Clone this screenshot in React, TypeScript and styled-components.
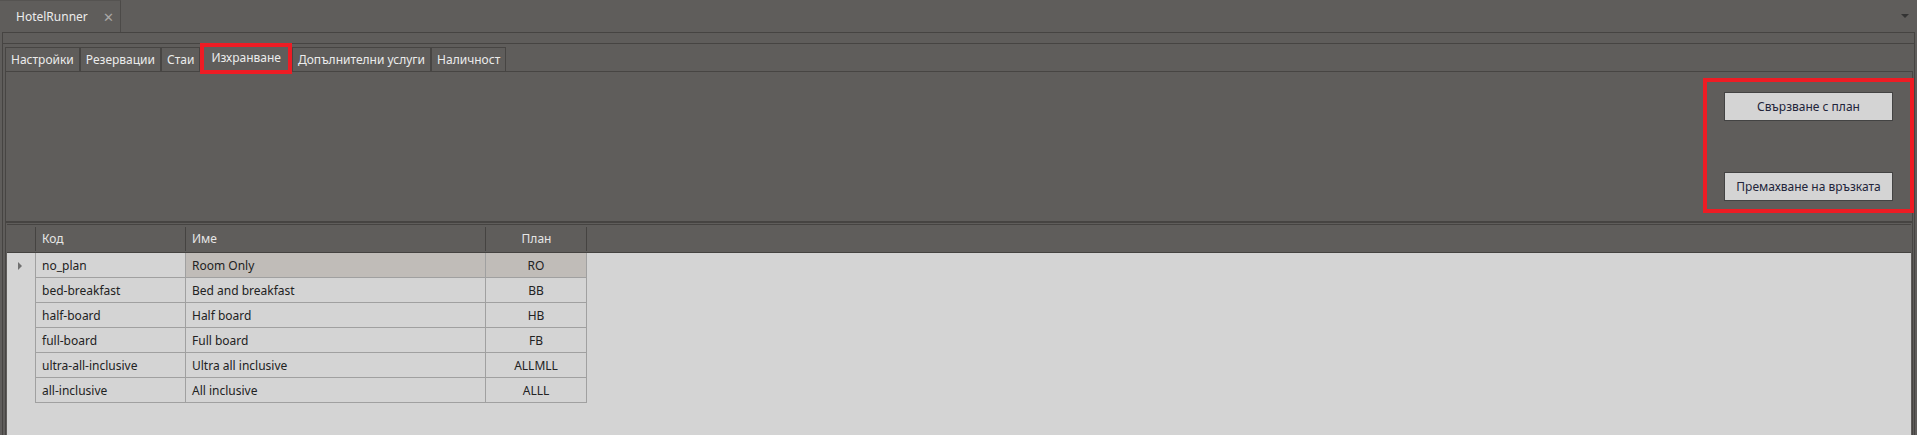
import {createGlobalStyle, styled} from "styled-components";

const GlobalStyle = createGlobalStyle`
  html, body {
    margin: 0;
    padding: 0;
    background: #5f5d5b;
  }

  body {
    font-family: "Noto Sans", "Open Sans", sans-serif;
    font-size: 12px;
  }
`;

const Window = styled.div`
  height: 435px;
  overflow: hidden;
  display: flex;
  flex-direction: column;
  background: #5f5d5b;
`;

const DocBar = styled.div`
  height: 32px;
  display: flex;
  align-items: stretch;
  justify-content: space-between;
`;

const DocTab = styled.div`
  width: 121px;
  box-sizing: border-box;
  border-top: 1px solid #555351;
  border-right: 1px solid #4c4a48;
  display: flex;
  align-items: center;
  padding-left: 16px;
  color: #ececec;
  font-size: 12px;
`;

const CloseMark = styled.span`
  margin-left: 15px;
  color: #a9a7a5;
  font-size: 13px;
`;

const DropArrow = styled.div`
  width: 0;
  height: 0;
  margin: 14px 8px 0 0;
  border-left: 4px solid transparent;
  border-right: 4px solid transparent;
  border-top: 4px solid #333;
`;

const Frame = styled.div`
  flex: 1;
  margin: 0 2px;
  border: 1px solid #464442;
  border-bottom: none;
  display: flex;
  flex-direction: column;
  min-height: 0;
`;

const ToolStrip = styled.div`
  height: 10px;
  border-bottom: 1px solid #464442;
`;

const TabControl = styled.div`
  flex: 1;
  padding: 0 1px 0 2px;
  display: flex;
  flex-direction: column;
  min-height: 0;
`;

const TabStrip = styled.div`
  height: 27px;
  display: flex;
  align-items: flex-end;
`;

const Tab = styled.div<{ $active?: boolean }>`
  box-sizing: border-box;
  height: ${p => (p.$active ? "31px" : "24px")};
  margin-bottom: ${p => (p.$active ? "-3px" : "0")};
  padding: ${p => (p.$active ? "0 7px 3px" : "0 5px")};
  border: ${p => (p.$active ? "4px solid #ed1c24" : "1px solid #474543")};
  border-bottom: ${p => (p.$active ? "4px solid #ed1c24" : "none")};
  display: flex;
  align-items: center;
  color: #ececec;
  white-space: nowrap;
  position: relative;
  z-index: ${p => (p.$active ? 2 : 0)};
`;

const TabPage = styled.div`
  flex: 1;
  border: 1px solid #474543;
  border-bottom: none;
  display: flex;
  flex-direction: column;
  min-height: 0;
`;

const CommandArea = styled.div`
  height: 149px;
  box-sizing: border-box;
  padding-top: 6px;
  display: flex;
  justify-content: flex-end;
  align-items: flex-start;
`;

const CommandBox = styled.div`
  width: 211px;
  height: 135px;
  box-sizing: border-box;
  margin-right: -2px;
  border: 4px solid #ed1c24;
  padding: 10px 0 0;
  display: flex;
  flex-direction: column;
  align-items: center;
  gap: 51px;
`;

const CommandButton = styled.button`
  width: 169px;
  height: 29px;
  background: #d4d4d4;
  border: 1px solid #434343;
  color: #22243a;
  font-family: "Noto Sans", "Open Sans", sans-serif;
  font-size: 12px;
  padding: 0;
`;

const Splitter = styled.div`
  height: 2px;
  background: #464442;
  margin-bottom: 1px;
`;

const Grid = styled.div`
  flex: 1;
  margin: 0 1px;
  border-top: 1px solid #464442;
  background: #d4d4d4;
  display: flex;
  flex-direction: column;
`;

const HeaderRow = styled.div`
  height: 27px;
  background: #5f5d5b;
  border-bottom: 1px solid #444240;
  display: grid;
  grid-template-columns: 29px 150px 300px 101px;
`;

const HeaderCell = styled.div<{ $center?: boolean }>`
  position: relative;
  display: flex;
  align-items: center;
  justify-content: ${p => (p.$center ? "center" : "flex-start")};
  padding-left: ${p => (p.$center ? "0" : "6px")};
  color: #e6e6e6;

  &::after {
    content: "";
    position: absolute;
    right: 0;
    top: 2px;
    bottom: 1px;
    width: 1px;
    background: #454341;
  }
`;

const BodyRow = styled.div`
  height: 25px;
  display: grid;
  grid-template-columns: 29px 150px 300px 101px;
`;

const RowHead = styled.div`
  box-sizing: border-box;
  border-right: 1px solid #a0a0a0;
  display: flex;
  align-items: center;
  padding-left: 11px;
`;

const RowArrow = styled.span`
  width: 0;
  height: 0;
  border-top: 4px solid transparent;
  border-bottom: 4px solid transparent;
  border-left: 4px solid #707070;
`;

const Cell = styled.div<{ $center?: boolean; $selected?: boolean }>`
  box-sizing: border-box;
  border-right: 1px solid #a0a0a0;
  border-bottom: 1px solid #a0a0a0;
  background: ${p => (p.$selected ? "#c0bcb8" : "#d4d4d4")};
  display: flex;
  align-items: center;
  justify-content: ${p => (p.$center ? "center" : "flex-start")};
  padding-left: ${p => (p.$center ? "0" : "6px")};
  color: #222;
  white-space: nowrap;
`;

const tabs = ["Настройки", "Резервации", "Стаи", "Изхранване", "Допълнителни услуги", "Наличност"];

const plans = [
    {code: "no_plan", name: "Room Only", plan: "RO"},
    {code: "bed-breakfast", name: "Bed and breakfast", plan: "BB"},
    {code: "half-board", name: "Half board", plan: "HB"},
    {code: "full-board", name: "Full board", plan: "FB"},
    {code: "ultra-all-inclusive", name: "Ultra all inclusive", plan: "ALLMLL"},
    {code: "all-inclusive", name: "All inclusive", plan: "ALLL"},
];

export default function App() {
    return (
        <Window>
            <GlobalStyle/>
            <DocBar>
                <DocTab>
                    HotelRunner
                    <CloseMark>✕</CloseMark>
                </DocTab>
                <DropArrow/>
            </DocBar>
            <Frame>
                <ToolStrip/>
                <TabControl>
                    <TabStrip>
                        {tabs.map(t => (
                            <Tab key={t} $active={t === "Изхранване"}>{t}</Tab>
                        ))}
                    </TabStrip>
                    <TabPage>
                        <CommandArea>
                            <CommandBox>
                                <CommandButton>Свързване с план</CommandButton>
                                <CommandButton>Премахване на връзката</CommandButton>
                            </CommandBox>
                        </CommandArea>
                        <Splitter/>
                        <Grid>
                            <HeaderRow>
                                <HeaderCell/>
                                <HeaderCell>Код</HeaderCell>
                                <HeaderCell>Име</HeaderCell>
                                <HeaderCell $center>План</HeaderCell>
                            </HeaderRow>
                            {plans.map((p, i) => (
                                <BodyRow key={p.code}>
                                    <RowHead>{i === 0 && <RowArrow/>}</RowHead>
                                    <Cell>{p.code}</Cell>
                                    <Cell $selected={i === 0}>{p.name}</Cell>
                                    <Cell $center $selected={i === 0}>{p.plan}</Cell>
                                </BodyRow>
                            ))}
                        </Grid>
                    </TabPage>
                </TabControl>
            </Frame>
        </Window>
    );
}
